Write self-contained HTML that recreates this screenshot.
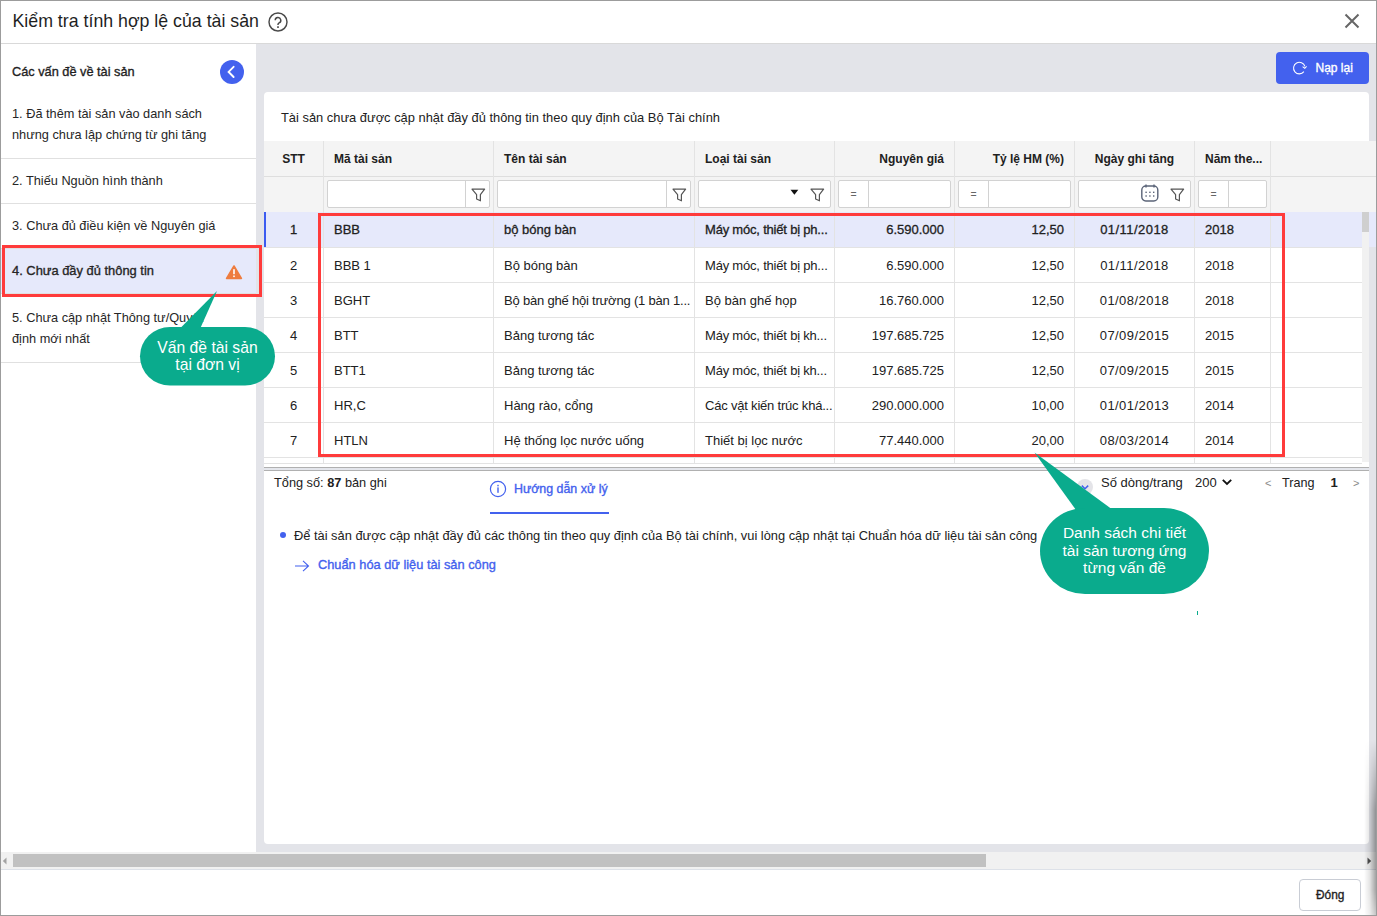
<!DOCTYPE html>
<html><head><meta charset="utf-8">
<style>
*{box-sizing:border-box;margin:0;padding:0}
html,body{width:1377px;height:916px;overflow:hidden;background:#fff}
body{font-family:"Liberation Sans",sans-serif;color:#212121;position:relative}
.abs{position:absolute}
.t{position:absolute;white-space:nowrap;line-height:1}
#frame{position:absolute;left:0;top:0;width:1377px;height:916px;border:1px solid #9c9c9c;z-index:50;pointer-events:none}
.li{position:absolute;left:1px;width:255px;height:45px;border-bottom:1px solid #e0e0e0;padding:11.5px 11px;font-size:12.75px;line-height:21px;color:#262626;white-space:nowrap}
.li.sel{background:#e6e9fb;font-size:12.9px;-webkit-text-stroke:0.35px currentColor}
.li.one{padding-top:10.5px}
.li.two{padding-top:12.5px}
.hc{position:absolute;top:142px;height:35px;line-height:35px;font-size:12px;font-weight:bold;color:#212121;white-space:nowrap;padding:0 10px}
.vb{position:absolute;width:1px;background:#e3e3e3}
.hb{position:absolute;height:1px;background:#e3e3e3}
.inp{position:absolute;top:180px;height:28px;background:#fff;border:1px solid #d2d2d2;border-radius:2px}
.isep{position:absolute;top:0;bottom:0;width:1px;background:#d2d2d2}
.dc{position:absolute;height:34px;line-height:34px;font-size:13px;color:#212121;white-space:nowrap;padding:0 10px;overflow:hidden}
.r{text-align:right}.c{text-align:center}
.med{-webkit-text-stroke:0.35px currentColor}
.eq{position:absolute;font-size:11px;color:#555;line-height:1}
</style></head>
<body>
<div id="frame"></div>
<div class="t" style="left:12.5px;top:13px;font-size:17.75px;color:#1f1f1f">Kiểm tra tính hợp lệ của tài sản</div>
<svg class="abs" style="left:267px;top:11px" width="22" height="22" viewBox="0 0 22 22">
  <circle cx="11" cy="11" r="9" fill="none" stroke="#4a4a4a" stroke-width="1.45"/>
  <path d="M8.2 9.3a2.8 2.8 0 1 1 3.9 2.6c-.8.4-1.1.8-1.1 1.6v.5" fill="none" stroke="#484848" stroke-width="1.45"/>
  <rect x="10.1" y="15.3" width="1.8" height="1.6" fill="#484848"/>
</svg>
<svg class="abs" style="left:1344px;top:13px" width="16" height="16" viewBox="0 0 16 16">
  <path d="M1.5 1.5L14.5 14.5M14.5 1.5L1.5 14.5" stroke="#666" stroke-width="2"/>
</svg>
<div class="abs" style="left:0;top:43px;width:1377px;height:1px;background:#d9d9d9"></div>
<div class="abs" style="left:256px;top:44px;width:1121px;height:808px;background:#e3e4e9"></div>
<div class="abs" style="left:0;top:44px;width:256px;height:808px;background:#fff"></div>
<div class="t med" style="left:12px;top:66.3px;font-size:12.75px;color:#1f1f1f">Các vấn đề về tài sản</div>
<svg class="abs" style="left:220px;top:60px" width="24" height="24" viewBox="0 0 24 24">
  <circle cx="12" cy="12" r="12" fill="#4361ee"/>
  <path d="M13.6 6.8L8.6 11.9L13.6 17" fill="none" stroke="#fff" stroke-width="1.9" stroke-linecap="round"/>
</svg>
<div class="li two" style="top:90px;height:69px">1. Đã thêm tài sản vào danh sách<br>nhưng chưa lập chứng từ ghi tăng</div>
<div class="li one" style="top:159px">2. Thiếu Nguồn hình thành</div>
<div class="li one" style="top:204px">3. Chưa đủ điều kiện về Nguyên giá</div>
<div class="li one sel" style="top:249px">4. Chưa đầy đủ thông tin</div>
<svg class="abs" style="left:225px;top:264px" width="18" height="16" viewBox="0 0 18 16">
  <path d="M9 2L16.4 14.4H1.6Z" fill="#ee7c3f" stroke="#ee7c3f" stroke-width="1.6" stroke-linejoin="round"/>
  <rect x="8.2" y="5.2" width="1.6" height="5" fill="#fff"/>
  <rect x="8.2" y="11.5" width="1.6" height="1.6" fill="#fff"/>
</svg>
<div class="li two" style="top:294px;height:69px">5. Chưa cập nhật Thông tư/Quyết<br>định mới nhất</div>
<div class="abs" style="left:1276px;top:52px;width:93px;height:32px;background:#4361ee;border-radius:4px"></div>
<svg class="abs" style="left:1292px;top:59.5px" width="16" height="16" viewBox="0 0 16 16">
  <path d="M11.9 11.7A5.8 5.8 0 1 1 12.9 6.4" fill="none" stroke="#fff" stroke-width="1.05"/>
  <path d="M10.6 6.6L12.8 8.3L14.6 6.4" fill="none" stroke="#fff" stroke-width="1.05"/>
</svg>
<div class="t med" style="left:1315.5px;top:62px;font-size:12px;color:#fff">Nạp lại</div>
<div class="abs" style="left:264px;top:92px;width:1105px;height:752px;background:#fff;border-radius:4px"></div>
<div class="t" style="left:281px;top:111.5px;font-size:12.9px;color:#212121">Tài sản chưa được cập nhật đầy đủ thông tin theo quy định của Bộ Tài chính</div>
<div class="abs" style="left:264px;top:141px;width:1112px;height:71px;background:#f4f4f4"></div>
<div class="hb" style="left:264px;top:176px;width:1112px;background:#dedede"></div>
<div class="abs" style="left:264px;top:212px;width:1112px;height:35px;background:#e6e9fb"></div>
<div class="abs" style="left:264px;top:212px;width:2px;height:35px;background:#3b5bf0"></div>
<div class="hb" style="left:264px;top:247px;width:1098px"></div>
<div class="hb" style="left:264px;top:282px;width:1098px"></div>
<div class="hb" style="left:264px;top:317px;width:1098px"></div>
<div class="hb" style="left:264px;top:352px;width:1098px"></div>
<div class="hb" style="left:264px;top:387px;width:1098px"></div>
<div class="hb" style="left:264px;top:422px;width:1098px"></div>
<div class="hb" style="left:264px;top:457px;width:1098px"></div>
<div class="hb" style="left:264px;top:463px;width:1098px"></div>
<div class="vb" style="left:323px;top:141px;height:323px"></div>
<div class="vb" style="left:493px;top:141px;height:323px"></div>
<div class="vb" style="left:694px;top:141px;height:323px"></div>
<div class="vb" style="left:834px;top:141px;height:323px"></div>
<div class="vb" style="left:954px;top:141px;height:323px"></div>
<div class="vb" style="left:1074px;top:141px;height:323px"></div>
<div class="vb" style="left:1194px;top:141px;height:323px"></div>
<div class="vb" style="left:1270px;top:141px;height:323px"></div>
<div class="hc c" style="left:264px;width:59px">STT</div>
<div class="hc" style="left:324px;width:169px">Mã tài sản</div>
<div class="hc" style="left:494px;width:200px">Tên tài sản</div>
<div class="hc" style="left:695px;width:139px">Loại tài sản</div>
<div class="hc r" style="left:835px;width:119px">Nguyên giá</div>
<div class="hc r" style="left:955px;width:119px">Tỷ lệ HM (%)</div>
<div class="hc c" style="left:1075px;width:119px">Ngày ghi tăng</div>
<div class="hc" style="left:1195px;width:75px">Năm the...</div>
<div class="inp" style="left:327px;width:163px"></div>
<div class="inp" style="left:497px;width:194px"></div>
<div class="inp" style="left:698px;width:133px"></div>
<div class="inp" style="left:838px;width:113px"></div>
<div class="inp" style="left:958px;width:113px"></div>
<div class="inp" style="left:1078px;width:113px"></div>
<div class="inp" style="left:1198px;width:69px"></div>
<div class="abs" style="left:465px;top:180px;width:1px;height:28px;background:#d2d2d2"></div>
<svg class="abs" style="left:471px;top:187.8px" width="15" height="15" viewBox="0 0 15 15"><path d="M1 1.2H13.6L9.4 6.6V12.8L5.6 11V6.6Z" fill="none" stroke="#555" stroke-width="1.2" stroke-linejoin="round"/></svg>
<div class="abs" style="left:666px;top:180px;width:1px;height:28px;background:#d2d2d2"></div>
<svg class="abs" style="left:672px;top:187.8px" width="15" height="15" viewBox="0 0 15 15"><path d="M1 1.2H13.6L9.4 6.6V12.8L5.6 11V6.6Z" fill="none" stroke="#555" stroke-width="1.2" stroke-linejoin="round"/></svg>
<svg class="abs" style="left:790px;top:189px" width="9" height="7" viewBox="0 0 9 7"><path d="M0.5 0.8H8.3L4.4 5.8Z" fill="#111"/></svg>
<svg class="abs" style="left:810px;top:187.8px" width="15" height="15" viewBox="0 0 15 15"><path d="M1 1.2H13.6L9.4 6.6V12.8L5.6 11V6.6Z" fill="none" stroke="#555" stroke-width="1.2" stroke-linejoin="round"/></svg>
<div class="abs" style="left:868px;top:180px;width:1px;height:28px;background:#d2d2d2"></div>
<div class="t" style="left:850.5px;top:189px;font-size:10.5px;color:#666">=</div>
<div class="abs" style="left:988px;top:180px;width:1px;height:28px;background:#d2d2d2"></div>
<div class="t" style="left:970.5px;top:189px;font-size:10.5px;color:#666">=</div>
<div class="abs" style="left:1228px;top:180px;width:1px;height:28px;background:#d2d2d2"></div>
<div class="t" style="left:1210.5px;top:189px;font-size:10.5px;color:#666">=</div>
<svg class="abs" style="left:1140px;top:183px" width="20" height="20" viewBox="0 0 20 20">
 <rect x="1.8" y="3" width="16" height="15" rx="4" fill="none" stroke="#5b6478" stroke-width="1.4"/>
 <path d="M6 1.5V4.5M14 1.5V4.5" stroke="#5b6478" stroke-width="1.4"/>
 <g fill="#5b6478"><rect x="5.4" y="8.6" width="1.4" height="1.4"/><rect x="9.2" y="8.6" width="1.4" height="1.4"/><rect x="13" y="8.6" width="1.4" height="1.4"/>
 <rect x="5.4" y="12.3" width="1.4" height="1.4"/><rect x="9.2" y="12.3" width="1.4" height="1.4"/><rect x="13" y="12.3" width="1.4" height="1.4"/></g>
</svg>
<svg class="abs" style="left:1170px;top:187.8px" width="15" height="15" viewBox="0 0 15 15"><path d="M1 1.2H13.6L9.4 6.6V12.8L5.6 11V6.6Z" fill="none" stroke="#555" stroke-width="1.2" stroke-linejoin="round"/></svg>
<div class="dc c" style="left:264px;top:213px;width:59px;-webkit-text-stroke:0.3px currentColor">1</div>
<div class="dc" style="left:324px;top:213px;width:169px;-webkit-text-stroke:0.3px currentColor">BBB</div>
<div class="dc" style="left:494px;top:213px;width:200px;-webkit-text-stroke:0.3px currentColor">bộ bóng bàn</div>
<div class="dc" style="left:695px;top:213px;width:139px;-webkit-text-stroke:0.3px currentColor;letter-spacing:-0.2px;padding-right:0">Máy móc, thiết bị ph...</div>
<div class="dc r" style="left:835px;top:213px;width:119px;-webkit-text-stroke:0.3px currentColor">6.590.000</div>
<div class="dc r" style="left:955px;top:213px;width:119px;-webkit-text-stroke:0.3px currentColor">12,50</div>
<div class="dc c" style="left:1075px;top:213px;width:119px;-webkit-text-stroke:0.3px currentColor;letter-spacing:0.45px">01/11/2018</div>
<div class="dc" style="left:1195px;top:213px;width:75px;-webkit-text-stroke:0.3px currentColor">2018</div>
<div class="dc c" style="left:264px;top:249px;width:59px">2</div>
<div class="dc" style="left:324px;top:249px;width:169px">BBB 1</div>
<div class="dc" style="left:494px;top:249px;width:200px">Bộ bóng bàn</div>
<div class="dc" style="left:695px;top:249px;width:139px;letter-spacing:-0.2px;padding-right:0">Máy móc, thiết bị ph...</div>
<div class="dc r" style="left:835px;top:249px;width:119px">6.590.000</div>
<div class="dc r" style="left:955px;top:249px;width:119px">12,50</div>
<div class="dc c" style="left:1075px;top:249px;width:119px;letter-spacing:0.45px">01/11/2018</div>
<div class="dc" style="left:1195px;top:249px;width:75px">2018</div>
<div class="dc c" style="left:264px;top:284px;width:59px">3</div>
<div class="dc" style="left:324px;top:284px;width:169px">BGHT</div>
<div class="dc" style="left:494px;top:284px;width:200px;letter-spacing:-0.2px;padding-right:0">Bộ bàn ghế hội trường (1 bàn 1...</div>
<div class="dc" style="left:695px;top:284px;width:139px">Bộ bàn ghế họp</div>
<div class="dc r" style="left:835px;top:284px;width:119px">16.760.000</div>
<div class="dc r" style="left:955px;top:284px;width:119px">12,50</div>
<div class="dc c" style="left:1075px;top:284px;width:119px;letter-spacing:0.45px">01/08/2018</div>
<div class="dc" style="left:1195px;top:284px;width:75px">2018</div>
<div class="dc c" style="left:264px;top:319px;width:59px">4</div>
<div class="dc" style="left:324px;top:319px;width:169px">BTT</div>
<div class="dc" style="left:494px;top:319px;width:200px">Bảng tương tác</div>
<div class="dc" style="left:695px;top:319px;width:139px;letter-spacing:-0.2px;padding-right:0">Máy móc, thiết bị kh...</div>
<div class="dc r" style="left:835px;top:319px;width:119px">197.685.725</div>
<div class="dc r" style="left:955px;top:319px;width:119px">12,50</div>
<div class="dc c" style="left:1075px;top:319px;width:119px;letter-spacing:0.45px">07/09/2015</div>
<div class="dc" style="left:1195px;top:319px;width:75px">2015</div>
<div class="dc c" style="left:264px;top:354px;width:59px">5</div>
<div class="dc" style="left:324px;top:354px;width:169px">BTT1</div>
<div class="dc" style="left:494px;top:354px;width:200px">Bảng tương tác</div>
<div class="dc" style="left:695px;top:354px;width:139px;letter-spacing:-0.2px;padding-right:0">Máy móc, thiết bị kh...</div>
<div class="dc r" style="left:835px;top:354px;width:119px">197.685.725</div>
<div class="dc r" style="left:955px;top:354px;width:119px">12,50</div>
<div class="dc c" style="left:1075px;top:354px;width:119px;letter-spacing:0.45px">07/09/2015</div>
<div class="dc" style="left:1195px;top:354px;width:75px">2015</div>
<div class="dc c" style="left:264px;top:389px;width:59px">6</div>
<div class="dc" style="left:324px;top:389px;width:169px">HR,C</div>
<div class="dc" style="left:494px;top:389px;width:200px">Hàng rào, cổng</div>
<div class="dc" style="left:695px;top:389px;width:139px;letter-spacing:-0.2px;padding-right:0">Các vật kiến trúc khá...</div>
<div class="dc r" style="left:835px;top:389px;width:119px">290.000.000</div>
<div class="dc r" style="left:955px;top:389px;width:119px">10,00</div>
<div class="dc c" style="left:1075px;top:389px;width:119px;letter-spacing:0.45px">01/01/2013</div>
<div class="dc" style="left:1195px;top:389px;width:75px">2014</div>
<div class="dc c" style="left:264px;top:424px;width:59px">7</div>
<div class="dc" style="left:324px;top:424px;width:169px">HTLN</div>
<div class="dc" style="left:494px;top:424px;width:200px">Hệ thống lọc nước uống</div>
<div class="dc" style="left:695px;top:424px;width:139px">Thiết bị lọc nước</div>
<div class="dc r" style="left:835px;top:424px;width:119px">77.440.000</div>
<div class="dc r" style="left:955px;top:424px;width:119px">20,00</div>
<div class="dc c" style="left:1075px;top:424px;width:119px;letter-spacing:0.45px">08/03/2014</div>
<div class="dc" style="left:1195px;top:424px;width:75px">2014</div>
<div class="abs" style="left:1362px;top:212px;width:7px;height:250px;background:#f1f1f1"></div>
<div class="abs" style="left:1362px;top:212px;width:7px;height:20px;background:#cfcfcf"></div>
<div class="abs" style="left:1369px;top:247px;width:8px;height:606px;background:#e3e4e9"></div>
<div class="abs" style="left:264px;top:467px;width:1105px;height:4px;background:#e4e6ec;border-top:1px solid #b0b0b0;border-bottom:1px solid #b0b0b0"></div>
<div class="abs" style="left:2px;top:245px;width:260px;height:52px;border:3px solid #ff3b3b;z-index:5"></div>
<div class="abs" style="left:318px;top:213px;width:967px;height:244px;border:3px solid #ff3b3b;z-index:5"></div>
<div class="abs" style="left:1px;top:852px;width:1375px;height:18px;background:#f1f1f1;border-bottom:1px solid #dde1e8"></div>
<div class="abs" style="left:13px;top:854px;width:973px;height:13px;background:#c1c1c1"></div>
<svg class="abs" style="left:0.5px;top:856px" width="8" height="10" viewBox="0 0 8 10"><path d="M5.5 1.5V8.5L1.8 5Z" fill="#a3a3a3"/></svg>
<svg class="abs" style="left:1365px;top:856px" width="8" height="10" viewBox="0 0 8 10"><path d="M2.5 1.5V8.5L6.2 5Z" fill="#505050"/></svg>
<div class="abs" style="left:1299px;top:879px;width:62px;height:32px;border:1px solid #c9cdd5;border-radius:4px;background:#fff"></div>
<div class="t med" style="left:1316px;top:890px;font-size:11.9px;color:#1f1f1f">Đóng</div>
<div class="t" style="left:274px;top:477px;font-size:12.75px;color:#212121">Tổng số: <b>87</b> bản ghi</div>
<svg class="abs" style="left:489px;top:480px" width="18" height="18" viewBox="0 0 18 18">
 <circle cx="9" cy="9" r="7.6" fill="none" stroke="#4361ee" stroke-width="1.2"/>
 <rect x="8.3" y="7.4" width="1.4" height="5.4" fill="#4361ee"/><rect x="8.3" y="4.8" width="1.4" height="1.5" fill="#4361ee"/>
</svg>
<div class="t med" style="left:514px;top:482.5px;font-size:12.4px;color:#4361ee">Hướng dẫn xử lý</div>
<div class="abs" style="left:490px;top:512px;width:119px;height:2px;background:#4361ee"></div>
<div class="abs" style="left:280px;top:532px;width:6px;height:6px;border-radius:50%;background:#4361ee"></div>
<div class="t" style="left:294px;top:530px;font-size:12.85px;color:#212121">Để tài sản được cập nhật đầy đủ các thông tin theo quy định của Bộ tài chính, vui lòng cập nhật tại Chuẩn hóa dữ liệu tài sản công</div>
<svg class="abs" style="left:294px;top:559px" width="16" height="14" viewBox="0 0 16 14">
 <path d="M1 7H14.5M9 1.8L14.5 7L9 12.2" fill="none" stroke="#4361ee" stroke-width="1.1"/>
</svg>
<div class="t med" style="left:318px;top:559px;font-size:12.8px;color:#4361ee">Chuẩn hóa dữ liệu tài sản công</div>
<svg class="abs" style="left:1077px;top:478.5px" width="16" height="16" viewBox="0 0 16 16">
 <circle cx="8" cy="8" r="8" fill="#e4e4e8"/><path d="M4.8 6.6L8 9.8L11.2 6.6" fill="none" stroke="#4361ee" stroke-width="1.5"/>
</svg>
<div class="t" style="left:1101px;top:476px;font-size:13px;color:#212121">Số dòng/trang</div>
<div class="t" style="left:1195px;top:476px;font-size:13px;color:#212121">200</div>
<svg class="abs" style="left:1221px;top:477px" width="12" height="10" viewBox="0 0 12 10">
 <path d="M1.8 2.8L6 7L10.2 2.8" fill="none" stroke="#111" stroke-width="1.8"/>
</svg>
<div class="t" style="left:1265px;top:478px;font-size:11px;color:#8a8a8a">&lt;</div>
<div class="t" style="left:1282px;top:477px;font-size:12.6px;color:#212121">Trang</div>
<div class="t" style="left:1330.5px;top:476.3px;font-size:13px;font-weight:bold;color:#212121">1</div>
<div class="t" style="left:1353px;top:478px;font-size:11px;color:#8a8a8a">&gt;</div>
<svg class="abs" style="left:0;top:0;z-index:10" width="1377" height="916" viewBox="0 0 1377 916">
 <path d="M176.5 332 L217 291 L199.5 330 Z" fill="#0aab8d"/>
 <rect x="140" y="327" width="135" height="58.5" rx="30" ry="29.25" fill="#0aab8d"/>
 <path d="M1076 510 L1034.5 452.5 L1113 510 Z" fill="#0aab8d"/>
 <rect x="1040" y="508" width="169" height="86" rx="45" ry="43" fill="#0aab8d"/>
 <rect x="1197" y="611" width="1" height="4" fill="#0aab8d"/>
</svg>
<div class="t" style="left:140px;top:338.5px;width:135px;text-align:center;font-size:15.7px;line-height:17.8px;color:#fff;z-index:11">Vấn đề tài sản<br>tại đơn vị</div>
<div class="t" style="left:1040px;top:524px;width:169px;text-align:center;font-size:15.5px;line-height:17.6px;color:#fff;z-index:11">Danh sách chi tiết<br>tài sản tương ứng<br>từng vấn đề</div>
<div class="abs" style="left:1360px;top:740px;width:16px;height:176px;z-index:40;background:linear-gradient(to right,rgba(0,0,0,0) 25%,rgba(0,0,0,0.1) 60%,rgba(0,0,0,0.36));-webkit-mask-image:linear-gradient(to bottom,transparent 0,#000 70px,#000 150px,rgba(0,0,0,.6) 176px)"></div>
</body></html>
